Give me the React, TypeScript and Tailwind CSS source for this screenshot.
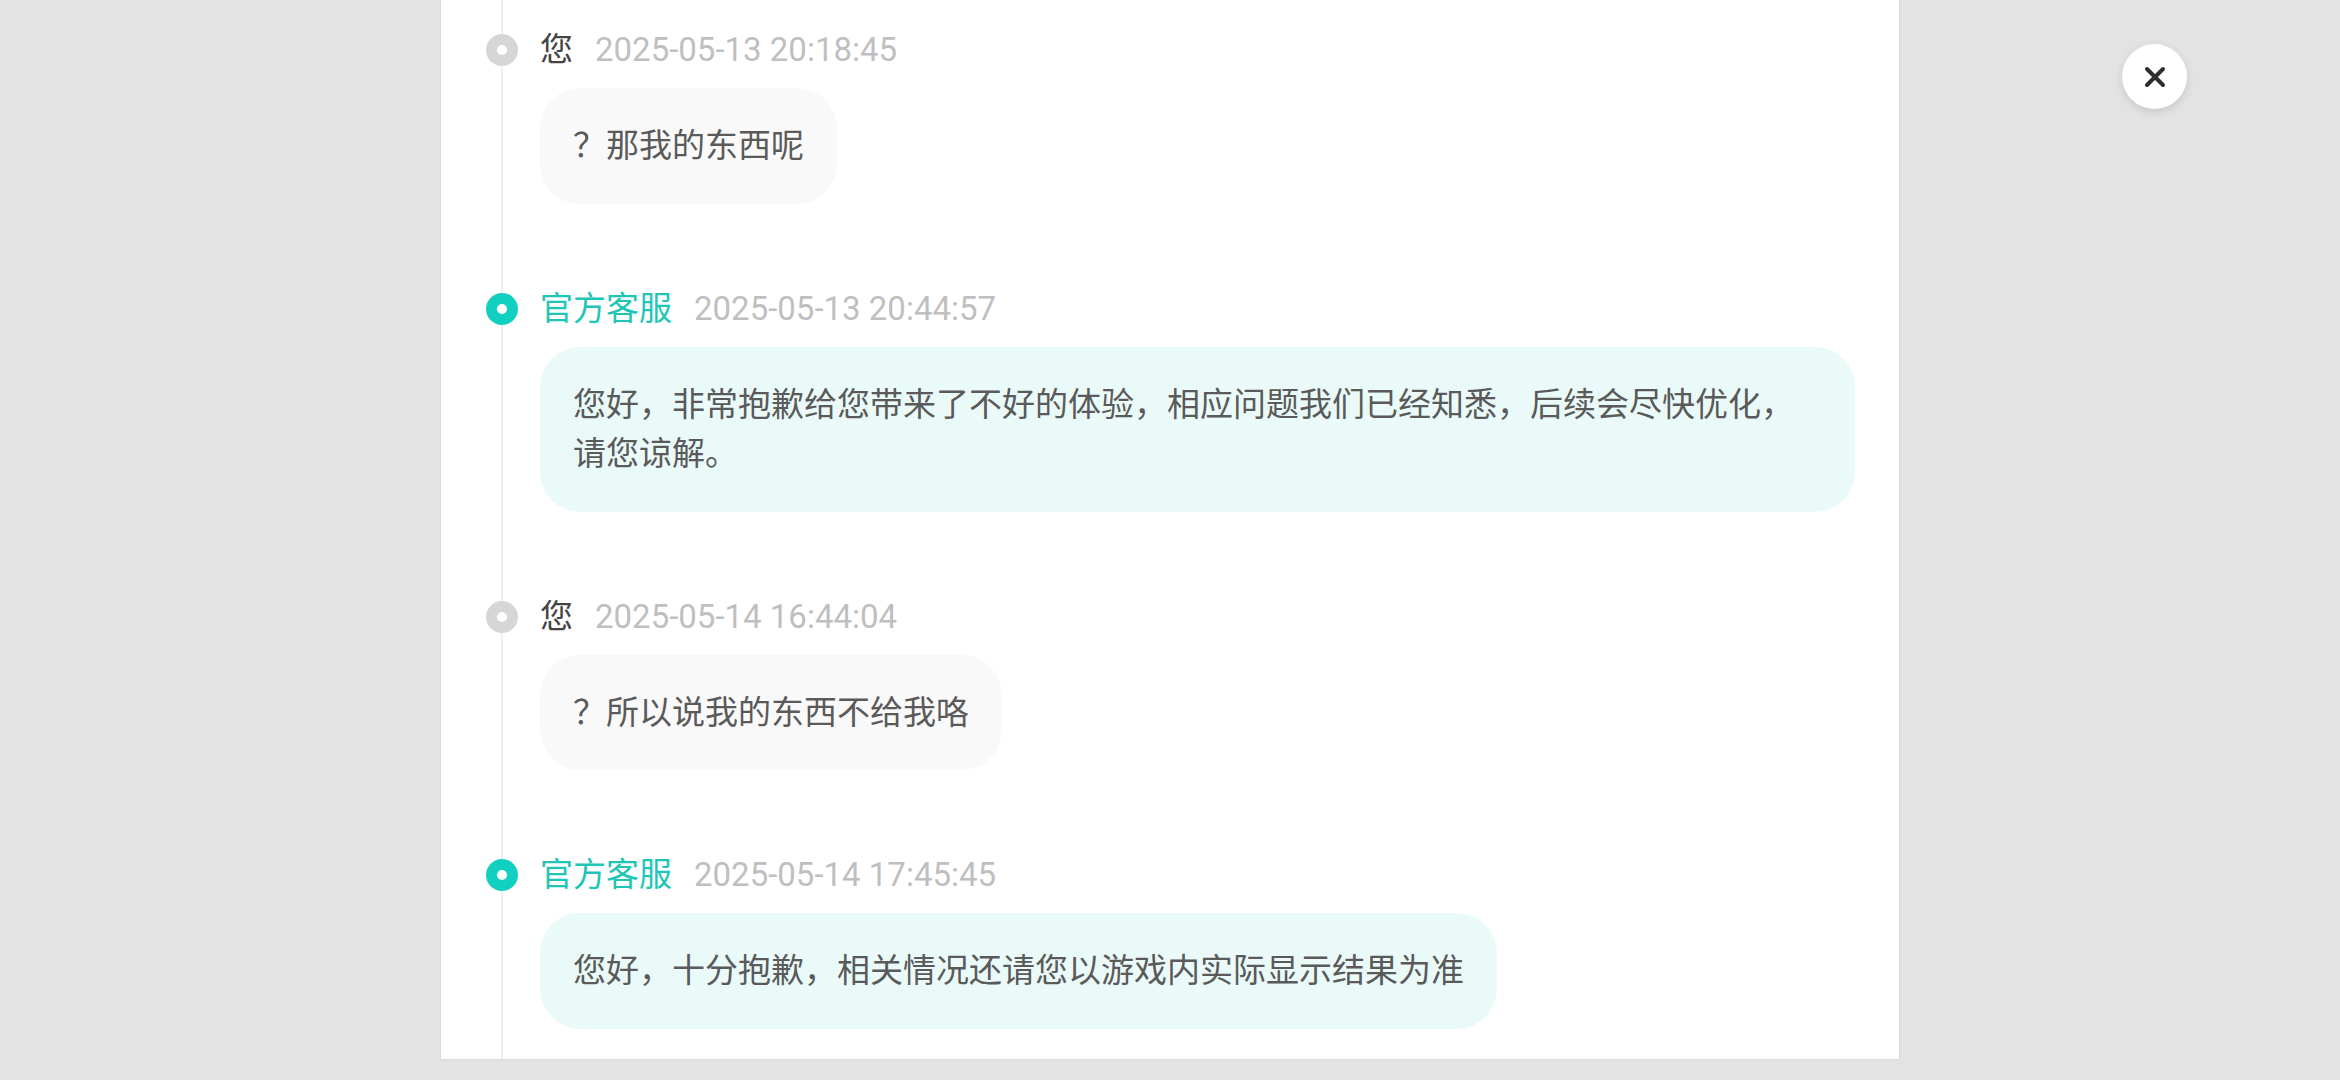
import React from "react";

type Msg = {
  who: "user" | "staff";
  time: string;
  text: string;
};

const msgs: Msg[] = [
  { who: "user", time: "2025-05-13 20:18:45", text: "？那我的东西呢" },
  {
    who: "staff",
    time: "2025-05-13 20:44:57",
    text: "您好，非常抱歉给您带来了不好的体验，相应问题我们已经知悉，后续会尽快优化，请您谅解。",
  },
  { who: "user", time: "2025-05-14 16:44:04", text: "？所以说我的东西不给我咯" },
  { who: "staff", time: "2025-05-14 17:45:45", text: "您好，十分抱歉，相关情况还请您以游戏内实际显示结果为准" },
];

function Item({ m }: { m: Msg }) {
  const staff = m.who === "staff";
  return (
    <div className="relative pl-[37px] pr-[44px] mb-[80px]">
      <div
        className={
          staff
            ? "absolute left-[-17px] top-[9px] w-[32px] h-[32px] rounded-full bg-[#12d0c0] flex items-center justify-center"
            : "absolute left-[-17px] top-[9px] w-[32px] h-[32px] rounded-full bg-[#d6d6d6] flex items-center justify-center"
        }
      >
        <div className="w-[10px] h-[10px] rounded-full bg-white" />
      </div>
      <div className="flex items-center h-[50px] text-[33px] leading-[50px]">
        <span className={staff ? "text-[#1fc6b6]" : "text-[#454545]"}>{staff ? "官方客服" : "您"}</span>
        <span className="ml-[22px] text-[#bfbfbf]">{m.time}</span>
      </div>
      <div
        className={
          staff
            ? "mt-[13px] w-fit max-w-full rounded-[40px] bg-[#eafaf9] px-[33px] py-[33px] text-[33px] leading-[49.5px] text-[#5a5a5a]"
            : "mt-[13px] w-fit max-w-full rounded-[40px] bg-[#f9f9f9] px-[33px] py-[33px] text-[33px] leading-[49.5px] text-[#5a5a5a]"
        }
      >
        {m.text}
      </div>
    </div>
  );
}

export default function App() {
  return (
    <div
      className="relative w-full h-[1080px] bg-[#e3e3e3] overflow-hidden"
      style={{ fontFamily: 'Roboto, "Noto Sans CJK SC", sans-serif' }}
    >
      <div className="ml-[441px] w-[1458px] h-[1059px] bg-white shadow-[0_0_2px_rgba(0,0,0,0.12)] overflow-hidden">
        <div className="ml-[60px] h-full border-l-2 border-[#efefef] pt-[25px]">
          {msgs.map((m, i) => (
            <Item key={i} m={m} />
          ))}
        </div>
      </div>
      <button className="absolute left-[2122px] top-[44px] w-[65px] h-[65px] rounded-full bg-white shadow-[0_3px_8px_rgba(0,0,0,0.12)] flex items-center justify-center">
        <svg width="22" height="22" viewBox="0 0 22 22" fill="none">
          <path d="M3 3L19 19M19 3L3 19" stroke="#2e2e2e" strokeWidth="4" strokeLinecap="round" />
        </svg>
      </button>
    </div>
  );
}
